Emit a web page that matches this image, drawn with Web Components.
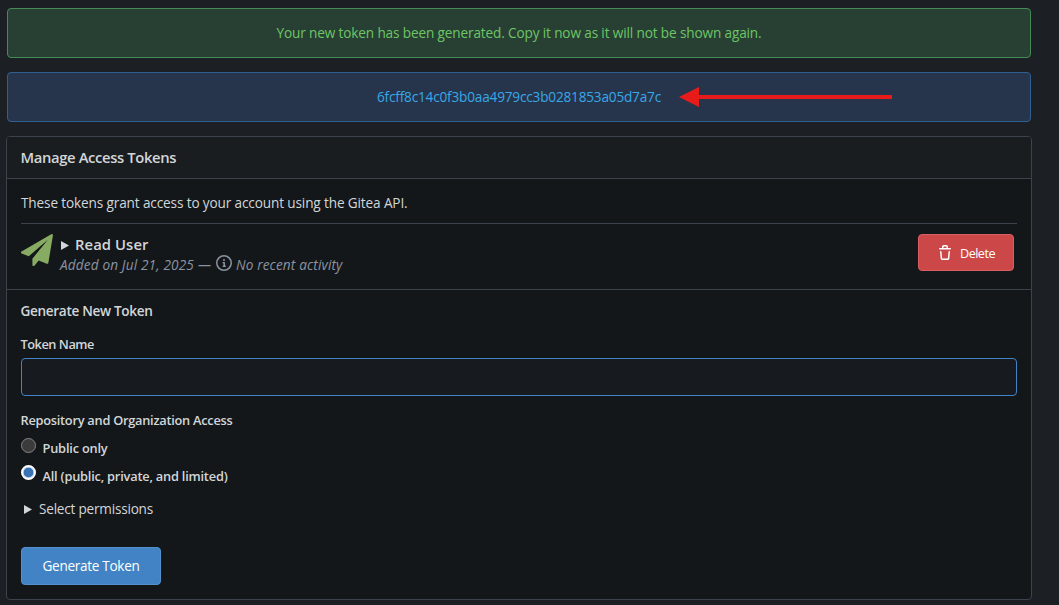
<!DOCTYPE html>
<html lang="en">
<head>
<meta charset="utf-8">
<title>Manage Access Tokens</title>
<style>
html{background:#1c1f24}
body{margin:0;height:605px;overflow:hidden;background:#1c1f24;color:#d2d6d9;font:13.6px/20px "Open Sans","Noto Sans",sans-serif}
</style>
</head>
<body>
<token-page></token-page>
<script>
const define=(name,html,setup)=>{
  const t=document.createElement('template');t.innerHTML=html;
  customElements.define(name,class extends HTMLElement{
    constructor(){super();this.attachShadow({mode:'open'}).append(t.content.cloneNode(true));}
    connectedCallback(){if(setup)setup(this);}
  });
};

// Single-line text tracked to occupy a given advance width.
define('fit-text',`<style>:host{display:inline-block;white-space:nowrap}span{display:inline-block}</style><span><slot></slot></span>`,el=>{
  const s=el.shadowRoot.querySelector('span'),w=parseFloat(el.getAttribute('w'));
  const n=el.textContent.length;
  s.style.letterSpacing=((w-s.getBoundingClientRect().width)/n).toFixed(4)+'px';
});

define('flash-message',`<style>
:host{display:flex;box-sizing:border-box;height:50px;margin:0 1px 14px;align-items:center;justify-content:center;border:1px solid #458a57;border-radius:4px;background:#284034;color:#6cc664;position:relative}
:host([kind=info]){border-color:#306090;background:#26354c;color:#38a8e8}
</style><slot></slot>`);

define('pointer-arrow',`<style>:host{display:block;position:absolute;left:671px;top:14px;width:214px;height:20px}svg{display:block}</style>
<svg width="214" height="20"><path fill="#e81b1b" d="M0 10 20 0v8h193v4H20v8z"/></svg>`);

define('plane-icon',`<style>:host{display:block;width:32px;height:32px;color:#87ab63}svg{display:block}</style>
<svg width="32" height="32" viewBox="0 0 16 16"><path fill="currentColor" d="M15.75.11a.61.61 0 0 1 .22.586l-2.285 13.715a.57.57 0 0 1-.286.41.6.6 0 0 1-.277.073.7.7 0 0 1-.214-.045l-4.045-1.652-2.16 2.634a.54.54 0 0 1-.437.205.5.5 0 0 1-.196-.036.56.56 0 0 1-.375-.535v-3.116l7.715-9.455-9.545 8.259-3.527-1.447a.54.54 0 0 1-.357-.483.55.55 0 0 1 .286-.535L15.116.09A.56.56 0 0 1 15.4 0a.58.58 0 0 1 .348.11"/></svg>`);

define('info-icon',`<style>:host{display:block;width:16px;height:16px}svg{display:block}</style>
<svg width="16" height="16" viewBox="0 0 16 16"><path fill="currentColor" d="M0 8a8 8 0 1 1 16 0A8 8 0 0 1 0 8Zm8-6.5a6.5 6.5 0 1 0 0 13 6.5 6.5 0 0 0 0-13ZM6.5 7.75A.75.75 0 0 1 7.25 7h1a.75.75 0 0 1 .75.75v2.75h.25a.75.75 0 0 1 0 1.5h-2a.75.75 0 0 1 0-1.5h.25v-2h-.25a.75.75 0 0 1-.75-.75ZM8 6a1 1 0 1 1 0-2 1 1 0 0 1 0 2Z"/></svg>`);

define('trash-icon',`<style>:host{display:block;width:16px;height:16px}svg{display:block}</style>
<svg width="16" height="16" viewBox="0 0 16 16"><path fill="currentColor" d="M11 1.75V3h2.25a.75.75 0 0 1 0 1.5H2.75a.75.75 0 0 1 0-1.5H5V1.75C5 .784 5.784 0 6.75 0h2.5C10.216 0 11 .784 11 1.75ZM4.496 6.675l.66 6.6a.25.25 0 0 0 .249.225h5.19a.25.25 0 0 0 .249-.225l.66-6.6a.75.75 0 0 1 1.492.149l-.66 6.6A1.748 1.748 0 0 1 10.595 15h-5.19a1.75 1.75 0 0 1-1.741-1.575l-.66-6.6a.75.75 0 1 1 1.492-.15ZM6.5 1.75V3h3V1.75a.25.25 0 0 0-.25-.25h-2.5a.25.25 0 0 0-.25.25Z"/></svg>`);

define('disclosure-mark',`<style>:host{display:block;width:8px;height:9px}svg{display:block}</style><svg width="8" height="9"><path fill="#d2d6d9" d="M0 0 8 4.5 0 9z"/></svg>`);

define('ui-button',`<style>
:host{display:flex;box-sizing:border-box;align-items:center;justify-content:center;border:1px solid #5592cd;border-radius:4px;background:#4183c4;color:#fff;width:140px;height:38px}
:host([kind=danger]){width:96px;height:37px;border-color:#d55f61;background:#cc4848;font-size:12.6px;gap:7px}
</style><slot></slot>`);

define('radio-option',`<style>
:host{display:flex;height:28px;font-weight:600;font-size:12.8px;gap:7px}
i{box-sizing:border-box;width:15px;height:15px;border-radius:50%;background:#3b3b3b;border:1px solid #858585;margin-top:3px}
:host([checked]) i{border:2px solid #fff;background:#3874b5;box-shadow:inset 0 0 0 .5px #fff;margin-top:2px}
.l{padding-top:3px;margin-left:-.5px}
</style><i></i><span class="l"><slot></slot></span>`);

define('token-item',`<style>
:host{display:flex;border-top:1px solid #3b444c;padding:10px 3px 0 0;height:55px}
plane-icon{margin-right:7px}
.main{flex:1}
.name{display:flex;align-items:center;gap:6px;font-weight:600;font-size:14.8px;height:20px;color:#d2d6d9}
disclosure-mark{margin-top:2px;margin-left:1px}
.meta{display:flex;align-items:center;height:20px;padding-top:1px;font-style:italic;color:#8b93a1}
info-icon{margin:-4px 4px 0 3px}
.dash{margin-left:4px}
.del{padding-top:2px}
</style>
<plane-icon></plane-icon>
<div class="main"><div class="name"><disclosure-mark></disclosure-mark><fit-text w="73.5">Read User</fit-text></div>
<div class="meta"><fit-text w="134">Added on Jul 21, 2025</fit-text><fit-text class="dash" w="15">—</fit-text><info-icon></info-icon><fit-text w="106.5">No recent activity</fit-text></div></div>
<ui-button kind="danger"><trash-icon></trash-icon><fit-text class="del" w="35">Delete</fit-text></ui-button>`);

define('token-form',`<style>
:host{display:block;padding:11px 14px 0 13.5px;border-top:1px solid #3b444c;color:#d2d6d9}
.b{font-weight:600;display:block}
.s{font-size:12.8px}
.name{margin-top:13px}
.input{box-sizing:border-box;height:38px;border:1px solid #4183c4;border-radius:4px;background:#171a1e;margin:4px 0 0 .5px}
.access{margin-top:14px}
.perm{display:flex;align-items:center;gap:7px;padding-left:3.5px;height:20px;margin-top:8px}
ui-button{margin:28px 0 0 .5px}
.radios{margin:5px 0 0 .5px}
</style>
<fit-text class="b" w="132">Generate New Token</fit-text>
<fit-text class="b s name" w="73.5">Token Name</fit-text>
<div class="input"></div>
<fit-text class="b s access" w="212">Repository and Organization Access</fit-text>
<div class="radios"><radio-option><fit-text w="65">Public only</fit-text></radio-option>
<radio-option checked><fit-text w="185">All (public, private, and limited)</fit-text></radio-option></div>
<div class="perm"><disclosure-mark></disclosure-mark><fit-text w="114">Select permissions</fit-text></div>
<ui-button><fit-text w="97">Generate Token</fit-text></ui-button>`);

define('token-card',`<style>
:host{display:block;box-sizing:border-box;height:464px;border:1px solid #3b444c;border-radius:4px;background:#14171a;overflow:hidden}
.head{box-sizing:border-box;height:42px;display:flex;align-items:center;padding:0 14px 2px 13.5px;background:#1a1d1f;border-bottom:1px solid #3b444c;font-size:14.8px;font-weight:600}
.list{padding:14px 14px 0}
.intro{height:30px}
</style>
<div class="head"><fit-text w="155.5">Manage Access Tokens</fit-text></div>
<div class="list"><div class="intro"><fit-text w="386.5">These tokens grant access to your account using the Gitea API.</fit-text></div>
<token-item></token-item></div>
<token-form></token-form>`);

define('token-page',`<style>:host{display:block;box-sizing:border-box;width:1032px;padding:8px 0 0 6px}</style>
<flash-message><fit-text w="485">Your new token has been generated. Copy it now as it will not be shown again.</fit-text></flash-message>
<flash-message kind="info"><fit-text w="284">6fcff8c14c0f3b0aa4979cc3b0281853a05d7a7c</fit-text><pointer-arrow></pointer-arrow></flash-message>
<token-card></token-card>`);
</script>
</body>
</html>
